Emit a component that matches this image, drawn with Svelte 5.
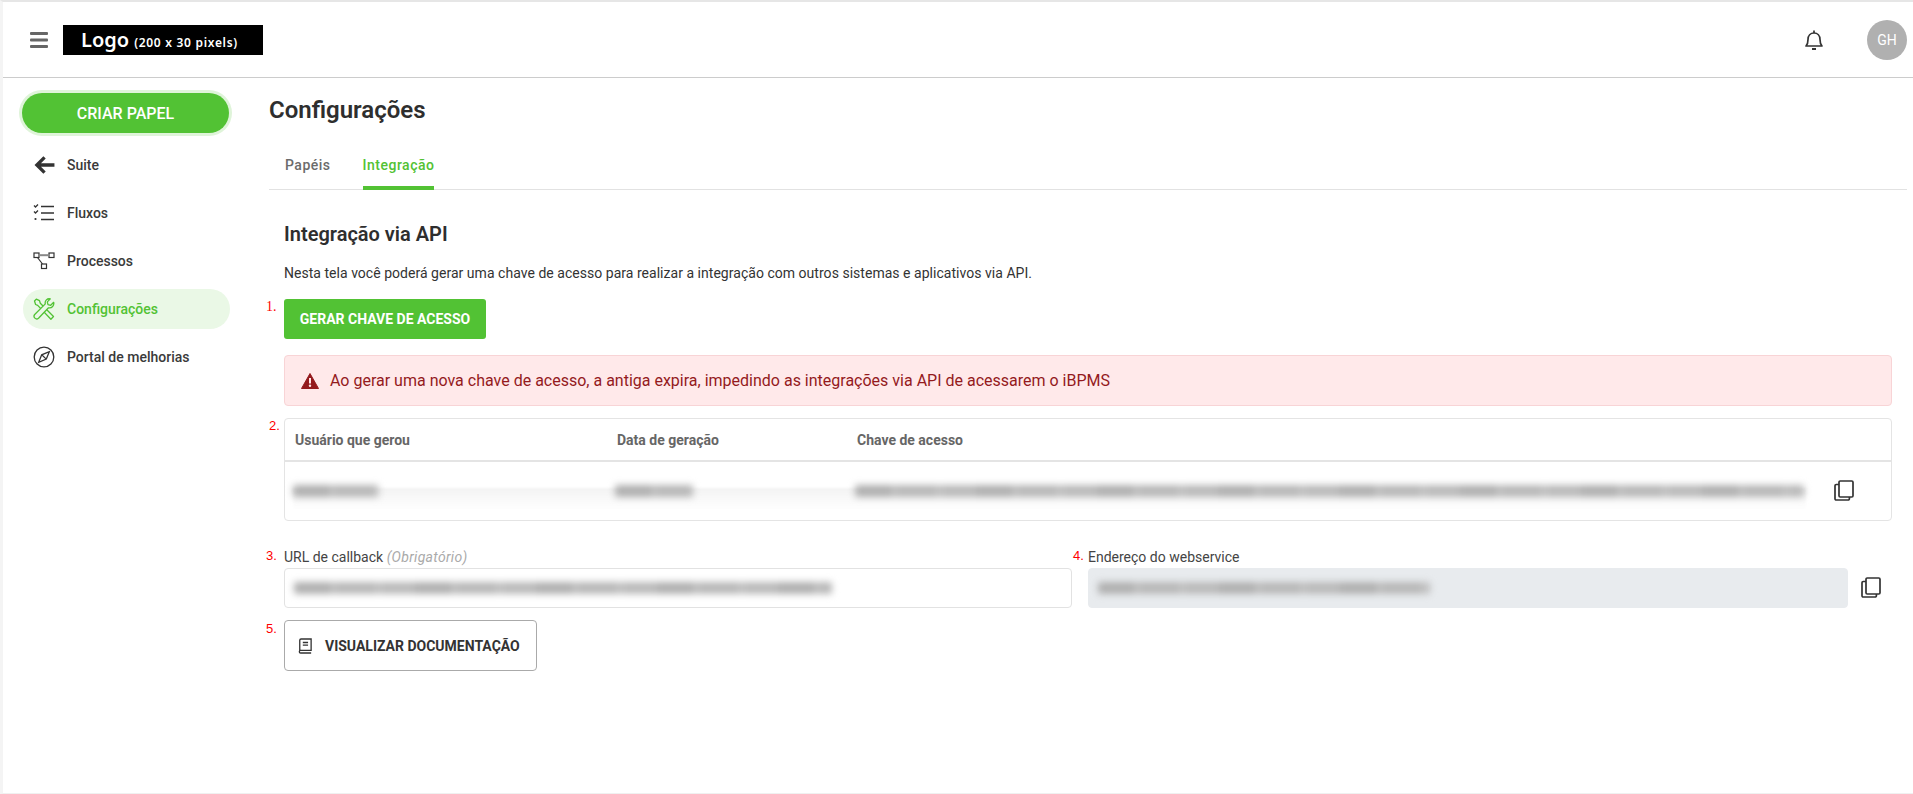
<script lang="ts">
const menu = [
    { label: 'Suite', icon: 'back' },
    { label: 'Fluxos', icon: 'flows' },
    { label: 'Processos', icon: 'process' },
    { label: 'Configurações', icon: 'tools', active: true },
    { label: 'Portal de melhorias', icon: 'compass' }
];
</script>

{#snippet copyIcon()}
    <svg class="copy" viewBox="0 0 22 24" width="22" height="24" fill="none" stroke="#333" stroke-width="1.700">
        <rect x="6" y="2" width="14" height="16" rx="1.200" />
        <path d="M6 5.500H3.200A1.200 1.200 0 0 0 2 6.700v13.100A1.200 1.200 0 0 0 3.200 21h12a1.200 1.200 0 0 0 1.200-1.200V18" />
    </svg>
{/snippet}

<div class="page">
    <header class="topbar">
        <div class="brand">
            <svg class="burger" viewBox="0 0 18 16" width="18" height="16" fill="#666">
                <rect y="0" width="18" height="3" rx="1" />
                <rect y="6.500" width="18" height="3" rx="1" />
                <rect y="13" width="18" height="3" rx="1" />
            </svg>
            <div class="logo"><b>Logo</b><span>(200 x 30 pixels)</span></div>
        </div>
        <div class="user">
            <svg viewBox="0 0 20 22" width="20" height="22" fill="none" stroke="#333" stroke-width="1.700">
                <path d="M2 17c1.500-1.500 2-3 2-6.500C4 6.500 6.500 4 10 4s6 2.500 6 6.500c0 3.500.5 5 2 6.500z" stroke-linejoin="round" />
                <path d="M10 1.500V4" />
                <path d="M8 20h4" stroke-width="2" />
            </svg>
            <div class="avatar">GH</div>
        </div>
    </header>

    <div class="body">
        <aside class="sidebar">
            <button class="create">CRIAR PAPEL</button>
            <nav>
                {#each menu as item}
                    <div class="item" class:active={item.active}>
                        <span class="icon">
                            {#if item.icon === 'back'}
                                <svg viewBox="0 0 20 20" width="22" height="22" fill="none" stroke="#333" stroke-width="3">
                                    <path d="M19.500 10H3M10.500 3l-7 7 7 7" />
                                </svg>
                            {:else if item.icon === 'flows'}
                                <svg viewBox="0 0 22 18" width="22" height="18" fill="none" stroke="#333" stroke-width="1.300">
                                    <path d="M1 1.500l1.500 1.500L5 .5M1 7.500L2.500 9 5 6.500" />
                                    <circle cx="2.500" cy="15" r="1.100" fill="#333" stroke="none" />
                                    <path d="M8 2.500h13M8 9h13M8 15.500h13" />
                                </svg>
                            {:else if item.icon === 'process'}
                                <svg viewBox="0 0 22 18" width="22" height="18" fill="none" stroke="#333" stroke-width="1.200">
                                    <rect x="1" y="1" width="5" height="4.500" />
                                    <rect x="16" y="1" width="5" height="4.500" />
                                    <rect x="8.500" y="12" width="5" height="4.500" />
                                    <path d="M6 3.200h10" stroke="#888" stroke-width="2" />
                                    <path d="M4.500 5.500L9.500 12" />
                                </svg>
                            {:else if item.icon === 'tools'}
                                <svg viewBox="0 0 22 22" width="22" height="22" fill="none" stroke="#52c234" stroke-width="1.300" stroke-linejoin="round">
                                    <path d="M1.500 3l1.800-1.800 3.200 1.500.8 2.500 13.200 13.300-2.600 2.800L4.700 7.400 2.600 6.500z" />
                                    <path d="M20.700 4.300l-3 3-2.700-.7-.7-2.700 3-3c-3-.7-5.800 1.700-5 5L1.700 16.500a2.700 2.700 0 0 0 3.800 3.800l10-10.500c3.300.8 5.900-2.300 5.200-5.500z" fill="#eaf8e6" />
                                </svg>
                            {:else}
                                <svg viewBox="0 0 22 22" width="22" height="22" fill="none" stroke="#333" stroke-width="1.300">
                                    <circle cx="11" cy="11" r="9.800" />
                                    <path d="M16.300 5.700l-3 7.400-7.600 3.200 3-7.500zM8.700 8.800l4.600 4.300" />
                                </svg>
                            {/if}
                        </span>
                        <span>{item.label}</span>
                    </div>
                {/each}
            </nav>
        </aside>

        <main class="content">
            <h1>Configurações</h1>
            <div class="tabs">
                <span class="tab">Papéis</span>
                <span class="tab selected">Integração</span>
            </div>

            <section class="panel">
                <h2>Integração via API</h2>
                <p>Nesta tela você poderá gerar uma chave de acesso para realizar a integração com outros sistemas e aplicativos via API.</p>

                <div class="numbered">
                    <span class="num n1">1.</span>
                    <button class="generate">GERAR CHAVE DE ACESSO</button>
                </div>

                <div class="alert">
                    <svg viewBox="0 0 18 16" width="18" height="16">
                        <path d="M9 .5L.5 15.500h17z" fill="#941a1d" stroke="#941a1d" stroke-linejoin="round" />
                        <rect x="8" y="5" width="2" height="5.500" fill="#ffe9ea" />
                        <circle cx="9" cy="12.700" r="1.200" fill="#ffe9ea" />
                    </svg>
                    <span>Ao gerar uma nova chave de acesso, a antiga expira, impedindo as integrações via API de acessarem o iBPMS</span>
                </div>

                <div class="numbered">
                    <span class="num n2">2.</span>
                    <div class="table">
                        <div class="thead">
                            <span class="c1">Usuário que gerou</span>
                            <span class="c2">Data de geração</span>
                            <span>Chave de acesso</span>
                        </div>
                        <div class="tbody">
                            <div class="c1 cell"><div class="blur b-user"></div></div>
                            <div class="c2 cell"><div class="blur b-date"></div></div>
                            <div class="cell grow"><div class="blur b-key"></div></div>
                            {@render copyIcon()}
                        </div>
                    </div>
                </div>

                <div class="fields">
                    <div class="field">
                        <label><span class="num n3">3.</span>URL de callback <em>(Obrigatório)</em></label>
                        <div class="input"><div class="blur b-url"></div></div>
                    </div>
                    <div class="field">
                        <label><span class="num n4">4.</span>Endereço do webservice</label>
                        <div class="input-row">
                            <div class="input readonly"><div class="blur b-ws"></div></div>
                            {@render copyIcon()}
                        </div>
                    </div>
                </div>

                <div class="numbered">
                    <span class="num n5">5.</span>
                    <button class="docs">
                        <svg viewBox="0 0 16 18" width="14" height="16" fill="none" stroke="#333" stroke-width="1.500">
                            <path d="M2 14.500V2.500A1.500 1.500 0 0 1 3.500 1H15v13H3a1.500 1.500 0 0 0 0 3h12" />
                            <path d="M5.500 5h6M5.500 8h6" />
                        </svg>
                        VISUALIZAR DOCUMENTAÇÃO
                    </button>
                </div>
            </section>
        </main>
    </div>
</div>

<style>
    :global(body) {
        margin: 0;
        background: #fff;
    }

    .page {
        height: 794px;
        box-sizing: border-box;
        border-top: 2px solid #e6e6e6;
        border-left: 3px solid #f4f4f4;
        border-bottom: 1px solid #f0f0f0;
        font-family: Roboto, "Liberation Sans", sans-serif;
        color: #333;
        overflow: hidden;
    }

    .topbar {
        height: 76px;
        box-sizing: border-box;
        border-bottom: 1px solid #ccc;
        display: flex;
        align-items: center;
        justify-content: space-between;
        padding: 0 6px 0 27px;
    }

    .brand,
    .user {
        display: flex;
        align-items: center;
    }

    .brand {
        gap: 15px;
    }

    .logo {
        width: 200px;
        height: 30px;
        box-sizing: border-box;
        padding-left: 18px;
        background: #000;
        color: #fff;
        display: flex;
        align-items: baseline;
        gap: 5px;
        line-height: 30px;
        font-family: "Noto Sans", sans-serif;
    }

    .logo b {
        font-size: 20px;
        font-weight: 600;
    }

    .logo span {
        font-size: 12px;
        font-weight: 600;
        letter-spacing: 0.7px;
    }

    .user {
        gap: 43px;
    }

    .avatar {
        width: 40px;
        height: 40px;
        border-radius: 50%;
        background: #b0b0b0;
        color: #fff;
        font-size: 14px;
        display: flex;
        align-items: center;
        justify-content: center;
    }

    .body {
        display: flex;
    }

    .sidebar {
        width: 266px;
        flex: none;
        box-sizing: border-box;
        padding: 15px 0 0 19px;
    }

    .create {
        display: block;
        width: 207px;
        height: 40px;
        border: none;
        border-radius: 20px;
        background: #52c234;
        box-shadow: 0 0 0 3px #dff4d9;
        color: #fff;
        font: 500 16px Roboto, sans-serif;
    }

    nav {
        margin: 12px 0 0 1px;
    }

    .item {
        width: 207px;
        height: 40px;
        margin-bottom: 8px;
        border-radius: 20px;
        padding-left: 9px;
        box-sizing: border-box;
        display: flex;
        align-items: center;
        gap: 11px;
        font-size: 14px;
        font-weight: 500;
        color: #3a3a3a;
    }

    .item.active {
        background: #eaf8e6;
        color: #52c234;
    }

    .icon {
        width: 24px;
        display: flex;
        justify-content: center;
    }

    .content {
        flex: 1;
        min-width: 0;
        padding-right: 6px;
    }

    h1 {
        margin: 17px 0 0;
        font-size: 24px;
        line-height: 30px;
        font-weight: 600;
        color: #2e2e2e;
    }

    .tabs {
        margin-top: 21px;
        height: 44px;
        box-sizing: border-box;
        border-bottom: 1px solid #e2e2e2;
        display: flex;
        gap: 32px;
        padding-left: 16px;
    }

    .tab {
        font-size: 14px;
        font-weight: 500;
        letter-spacing: 0.5px;
        line-height: 20px;
        padding-top: 9px;
        color: #6b6b6b;
        height: 44px;
        box-sizing: border-box;
    }

    .tab.selected {
        color: #52c234;
        border-bottom: 4px solid #52c234;
        border-radius: 3px 3px 0 0;
    }

    .panel {
        padding: 0 15px 0 15px;
    }

    h2 {
        margin: 31px 0 0;
        font-size: 20px;
        line-height: 26px;
        font-weight: 600;
        color: #2e2e2e;
    }

    p {
        margin: 16px 0 0;
        font-size: 14px;
        line-height: 20px;
        letter-spacing: 0.03px;
        color: #333;
    }

    .numbered {
        position: relative;
    }

    .num {
        position: absolute;
        font-family: "Liberation Sans", sans-serif;
        font-style: normal;
        font-size: 13px;
        line-height: 16px;
        color: #f00;
    }

    .n1 {
        left: -18px;
        top: 0;
        font-family: "Liberation Serif", serif;
        font-size: 14px;
    }

    .n2 {
        left: -15px;
        top: 0;
    }

    .n3 {
        left: -18px;
        top: 1px;
    }

    .n4 {
        left: -15px;
        top: 1px;
    }

    .n5 {
        left: -18px;
        top: 1px;
    }

    .generate {
        display: block;
        margin-top: 16px;
        width: 202px;
        height: 40px;
        border: none;
        border-radius: 3px;
        background: #52c234;
        color: #fff;
        font: 700 14px Roboto, sans-serif;
    }

    .alert {
        margin-top: 16px;
        height: 51px;
        box-sizing: border-box;
        background: #ffe9ea;
        border: 1px solid #f8d4d6;
        border-radius: 4px;
        display: flex;
        align-items: center;
        gap: 11px;
        padding-left: 16px;
        color: #941a1d;
        font-size: 16px;
    }

    .table {
        margin-top: 12px;
        height: 103px;
        box-sizing: border-box;
        border: 1px solid #e4e4e4;
        border-radius: 4px;
    }

    .thead {
        height: 43px;
        box-sizing: border-box;
        border-bottom: 2px solid #e4e4e4;
        display: flex;
        align-items: center;
        padding-left: 10px;
        font-size: 14px;
        font-weight: 700;
        color: #666;
    }

    .c1 {
        width: 322px;
        flex: none;
    }

    .c2 {
        width: 240px;
        flex: none;
    }

    .tbody {
        position: relative;
        display: flex;
        align-items: center;
        height: 58px;
        padding: 0 36px 0 10px;
    }

    /* pale smear under the blurred values */
    .tbody::before {
        content: "";
        position: absolute;
        left: 8px;
        right: 85px;
        top: 26px;
        height: 22px;
        background: linear-gradient(#f3f3f3, #fff);
        filter: blur(1px);
    }

    .cell {
        position: relative;
    }

    .cell.grow {
        flex: 1;
        margin-right: 27px;
    }

    .blur {
        height: 12px;
        margin-left: -2px;
        border-radius: 2px;
        filter: blur(3.500px);
        background: repeating-linear-gradient(90deg, #b0b0b0 0 37px, #c4c4c4 37px 41px, #b8b8b8 41px 83px, #cbcbcb 83px 86px, #bababa 86px 121px);
    }

    .b-user {
        width: 86px;
    }

    .b-date {
        width: 78px;
    }

    .b-key {
        width: 100%;
    }

    .b-url {
        width: 538px;
    }

    .b-ws {
        width: 332px;
    }

    .fields {
        margin-top: 26px;
        display: grid;
        grid-template-columns: 788px 1fr;
        gap: 16px;
    }

    label {
        display: block;
        position: relative;
        font-size: 14px;
        line-height: 20px;
        color: #444;
    }

    em {
        color: #aaa;
        letter-spacing: 0.3px;
    }

    .input {
        height: 40px;
        box-sizing: border-box;
        border: 1px solid #e2e2e2;
        border-radius: 4px;
        margin-top: 1px;
        padding: 0 11px;
        display: flex;
        align-items: center;
    }

    .input-row {
        display: flex;
        align-items: center;
        gap: 12px;
        padding-right: 10px;
    }

    .input-row .input {
        flex: 1;
    }

    .readonly {
        background: #e8ebee;
        border-color: #e8ebee;
    }

    .docs {
        margin-top: 12px;
        width: 253px;
        height: 51px;
        background: #fff;
        border: 1px solid #aaa;
        border-radius: 4px;
        display: flex;
        align-items: center;
        gap: 13px;
        padding-left: 13px;
        color: #333;
        font: 700 14px Roboto, sans-serif;
    }
</style>
